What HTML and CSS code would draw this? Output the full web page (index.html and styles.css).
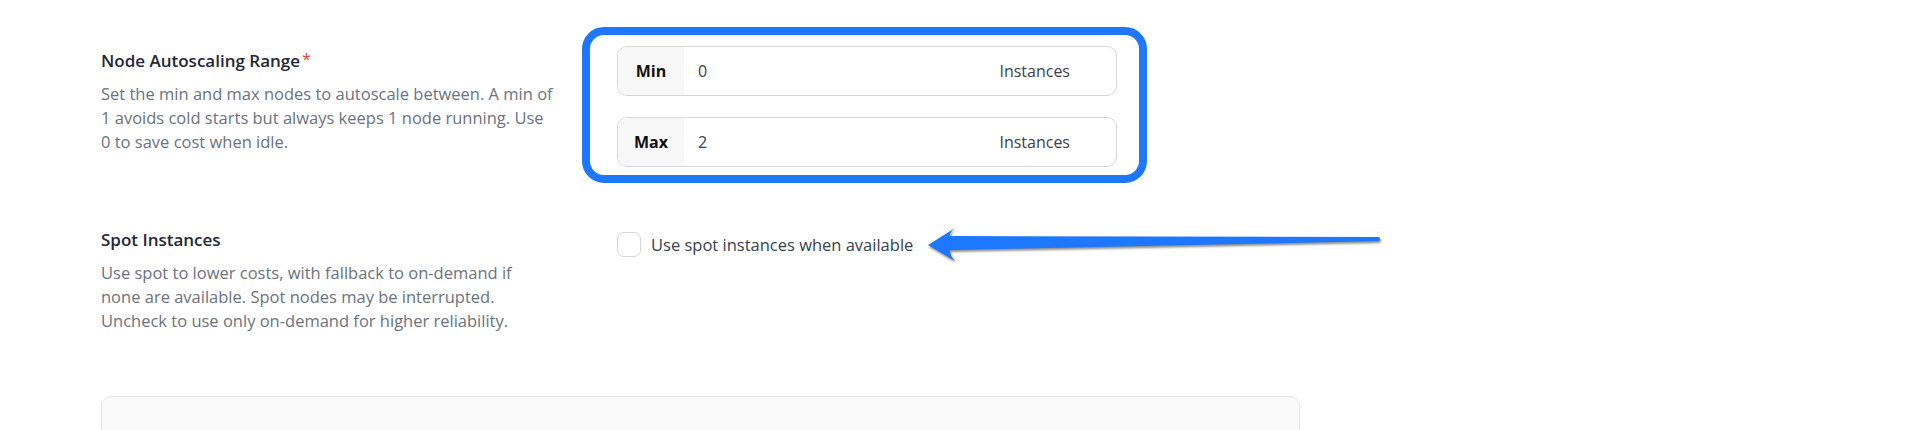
FILE: index.html
```html
<!DOCTYPE html>
<html lang="en">
<head>
<meta charset="utf-8">
<title>Node settings</title>
<link rel="stylesheet" href="styles.css">
</head>
<body>
<main class="page">
  <section class="row row-range">
    <div class="info">
      <h3 class="label">Node Autoscaling Range<span class="req">*</span></h3>
      <p class="desc">Set the min and max nodes to autoscale between. A min of 1 avoids cold starts but always keeps 1 node running. Use 0 to save cost when idle.</p>
    </div>
    <div class="control">
      <div class="highlight">
        <div class="input-group">
          <span class="addon">Min</span>
          <span class="value">0</span>
          <span class="suffix">Instances</span>
        </div>
        <div class="input-group">
          <span class="addon">Max</span>
          <span class="value">2</span>
          <span class="suffix">Instances</span>
        </div>
      </div>
    </div>
  </section>

  <section class="row row-spot">
    <div class="info">
      <h3 class="label">Spot Instances</h3>
      <p class="desc desc-narrow">Use spot to lower costs, with fallback to on-demand if none are available. Spot nodes may be interrupted. Uncheck to use only on-demand for higher reliability.</p>
    </div>
    <div class="control control-check">
      <label class="check">
        <span class="box"></span>
        <span class="check-text">Use spot instances when available</span>
      </label>
    </div>
  </section>

  <div class="card"></div>

  <svg class="arrow" width="470" height="50" viewBox="0 0 470 50" aria-hidden="true">
    <path d="M8 25 L35 8 Q29 13 30 16 L459 17 Q461 19 459 21 L30 30 Q29 34 35 41 Z" fill="#1d77ff"/>
  </svg>
</main>
</body>
</html>
```

FILE: styles.css
```css
* { box-sizing: border-box; }

html, body {
  margin: 0;
  padding: 0;
  background: #ffffff;
  height: 430px;
  overflow: hidden;
}

body {
  font-family: "Open Sans", "Noto Sans", Arial, sans-serif;
  font-size: 16px;
  line-height: 24px;
  color: #1f2937;
}

.page {
  position: relative;
  width: 1199px;
  margin-left: 101px;
  padding-top: 27px;
}

.row {
  display: grid;
  grid-template-columns: 516px 1fr;
  align-items: start;
}

.row-range .info { padding-top: 20px; }

.row-spot { margin-top: 45px; }

.label {
  margin: 0;
  font-size: 17px;
  line-height: 24px;
  font-weight: 600;
  color: #262637;
}

.req {
  color: #ef4444;
  font-weight: 400;
  font-size: 16px;
  margin-left: 2px;
  vertical-align: 2px;
}

.desc {
  margin: 9px 0 0;
  width: 454px;
  font-size: 16.5px;
  line-height: 24px;
  color: #6b7280;
}

.desc-narrow { width: 440px; }

.highlight {
  margin-left: -35px;
  width: 565px;
  border: 8px solid #1d77ff;
  border-radius: 22px;
  padding: 11px 22px 8px 27px;
  display: flex;
  flex-direction: column;
  gap: 21px;
}

.input-group {
  display: flex;
  align-items: center;
  height: 50px;
  border: 1px solid #d6d6de;
  border-radius: 10px;
  overflow: hidden;
  background: #ffffff;
}

.addon {
  width: 66px;
  align-self: stretch;
  display: flex;
  align-items: center;
  justify-content: center;
  background: #f8f8f9;
  font-weight: 700;
  color: #111111;
}

.value {
  flex: 1;
  padding-left: 14px;
  color: #374151;
}

.suffix {
  margin-right: 46px;
  color: #3f3f4a;
}

.control-check { padding-top: 4px; }

.check {
  display: flex;
  align-items: center;
  gap: 10px;
}

.box {
  width: 24px;
  height: 25px;
  border: 1px solid #d4d6de;
  border-radius: 7px;
  background: #ffffff;
}

.check-text {
  color: #374151;
  font-size: 16.5px;
}

.card {
  margin-top: 63px;
  height: 60px;
  border: 1px solid #e3e6ec;
  border-radius: 10px;
  background: #fafafa;
}

.arrow {
  position: absolute;
  left: 819px;
  top: 220px;
  filter: drop-shadow(1px 2px 1px rgba(0, 0, 0, 0.45));
}
```
